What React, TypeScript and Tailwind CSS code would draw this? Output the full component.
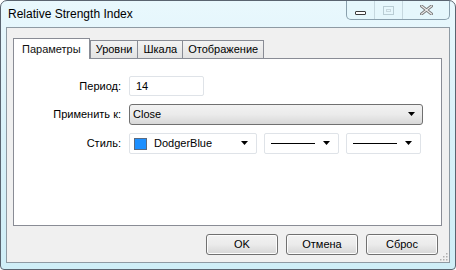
import React from "react";

const Arrow = () => (
  <svg width="8" height="5" viewBox="0 0 8 5" className="shrink-0">
    <path d="M0 0 H7 L3.5 4 Z" fill="#000" />
  </svg>
);

const Tab = ({ label, active }: { label: string; active?: boolean }) =>
  active ? (
    <div className="h-[21px] -mb-px relative z-10 px-[8px] flex items-center border border-b-0 border-[#898c95] bg-white text-[#111]">
      {label}
    </div>
  ) : (
    <div className="h-[18px] -ml-px first:ml-0 px-[5px] flex items-center border border-b-0 border-[#898c95] bg-gradient-to-b from-[#f3f3f3] to-[#e3e3e3] text-black">
      {label}
    </div>
  );

const Button = ({ label }: { label: string }) => (
  <div className="w-[72px] h-[21px] flex items-center justify-center rounded-[3px] border border-[#707070] bg-gradient-to-b from-[#f2f2f2] via-[#ebebeb] to-[#d6d6d6] shadow-[inset_0_0_0_1px_#fcfcfc] text-black">
    {label}
  </div>
);

export default function App() {
  return (
    <div
      className="w-[456px] h-[270px] flex flex-col border border-[#5a6470] rounded-t-[7px] rounded-b-[4px] bg-gradient-to-b from-[#e9f8fd] via-[#d8f1f9] to-[#cfeef7] relative text-[11px]"
      style={{ fontFamily: '"Liberation Sans", Arial, sans-serif' }}
    >
      {/* title bar */}
      <div className="h-[26px] flex items-center pl-[7px] shrink-0 text-black text-[12px]">
        Relative Strength Index
      </div>
      <div className="absolute top-0 right-[5px] w-[104px] h-[19px] flex border border-t-0 border-[#8aa0ad] rounded-b-[5px] bg-[#e4f6fb]/60">
        <div className="w-[28px] h-full flex items-center justify-center border-r border-[#c6d8df]">
          <div className="w-[11px] h-[4px] mt-[5px] rounded-[1px] border border-[#3c3c3c] bg-white" />
        </div>
        <div className="w-[28px] h-full flex items-center justify-center border-r border-[#c6d8df]">
          <div className="w-[11px] h-[9px] mt-[1px] border border-[#b9cdd4] flex items-center justify-center">
            <div className="w-[5px] h-[3px] border border-[#c8d8de]" />
          </div>
        </div>
        <div className="flex-1 h-full flex items-center justify-center">
          <svg width="13" height="10" viewBox="0 0 13 10">
            <path d="M1.5 1 L11.5 9 M11.5 1 L1.5 9" stroke="#7a7a7a" strokeWidth="3" strokeLinecap="square" />
            <path d="M1.5 1 L11.5 9 M11.5 1 L1.5 9" stroke="#eeeeee" strokeWidth="1.2" strokeLinecap="square" />
          </svg>
        </div>
      </div>

      {/* client area */}
      <div className="mx-[5px] mb-[6px] flex-1 flex flex-col border border-[#8e9aa3] bg-[#f0f0f0] pt-[9px] pl-[6px] pr-[7px] relative">
        <div className="flex items-end h-[21px]">
          <Tab label="Параметры" active />
          <div className="flex">
            <Tab label="Уровни" />
            <Tab label="Шкала" />
            <Tab label="Отображение" />
          </div>
        </div>
        <div className="h-[168px] border border-[#898c95] bg-white pt-[17px]">
          <div className="grid grid-cols-[107px_1fr] gap-x-[8px] gap-y-[8px] items-center">
            <div className="text-right text-black">Период:</div>
            <div className="w-[75px] h-[20px] rounded-[2px] border border-[#dfe3e8] flex items-center pl-[6px] text-black">
              14
            </div>
            <div className="text-right text-black">Применить к:</div>
            <div className="w-[294px] h-[21px] rounded-[3px] border border-[#707070] bg-gradient-to-b from-[#f2f2f2] via-[#ebebeb] to-[#d8d8d8] flex items-center pl-[3px] pr-[6px] justify-between text-black">
              <span>Close</span>
              <Arrow />
            </div>
            <div className="text-right text-black">Стиль:</div>
            <div className="flex gap-[7px]">
              <div className="w-[128px] h-[21px] rounded-[2px] border border-[#dfe3e8] flex items-center pl-[4px] pr-[7px] text-black">
                <div className="w-[13px] h-[12px] bg-[#1e90ff] border border-[#5a6a80] mr-[7px]" />
                <span className="flex-1">DodgerBlue</span>
                <Arrow />
              </div>
              <div className="w-[75px] h-[21px] rounded-[2px] border border-[#dfe3e8] flex items-center pl-[6px] pr-[7px]">
                <div className="w-[44px] h-px bg-black" />
                <div className="flex-1" />
                <Arrow />
              </div>
              <div className="w-[75px] h-[21px] rounded-[2px] border border-[#dfe3e8] flex items-center pl-[6px] pr-[7px]">
                <div className="w-[44px] h-px bg-black" />
                <div className="flex-1" />
                <Arrow />
              </div>
            </div>
          </div>
        </div>
        <div className="flex justify-end gap-[8px] mt-[8px] pr-[4px]">
          <Button label="OK" />
          <Button label="Отмена" />
          <Button label="Сброс" />
        </div>
        <svg width="8" height="8" viewBox="0 0 8 8" className="absolute right-[1px] bottom-[1px]">
          {[[6, 0], [6, 3], [3, 3], [6, 6], [3, 6], [0, 6]].map(([x, y], i) => (
            <rect key={i} x={x} y={y} width="1.5" height="1.5" fill="#b0b0b0" />
          ))}
        </svg>
      </div>
    </div>
  );
}
